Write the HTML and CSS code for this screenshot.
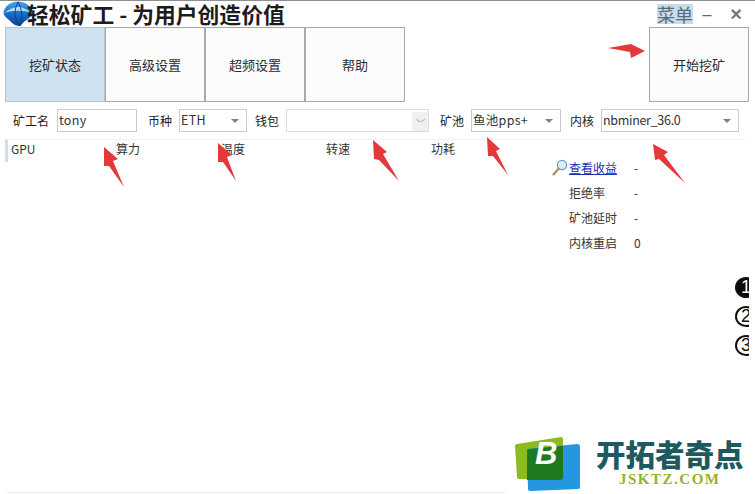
FILE: index.html
```html
<!DOCTYPE html>
<html lang="zh">
<head>
<meta charset="utf-8">
<title>轻松矿工</title>
<link rel="stylesheet" href="styles.css">
</head>
<body>
<div class="app">
  <header class="titlebar">
    <svg class="globe" width="30" height="26" viewBox="0 0 30 26">
      <defs>
        <linearGradient id="gl" x1="0" y1="0" x2="0" y2="1">
          <stop offset="0" stop-color="#4aa3e6"/>
          <stop offset="0.45" stop-color="#1b74cc"/>
          <stop offset="1" stop-color="#0c3f92"/>
        </linearGradient>
      </defs>
      <path d="M15 .5 C23 .5 29 6 29.5 12 C29 15 25 18 22 20 L17 25 C12 25 9 22 6 19 C3 17 .5 14 .5 12 C1 6 7 .5 15 .5Z" fill="url(#gl)"/>
      <path d="M1 12 C8 9 22 9 29 12 C22 7 18 6 15 6 C11 6 6 8 1 12Z" fill="#b5dcf7"/>
      <path d="M15 1 C11 8 11 17 16 25 M15 1 C19 8 20 16 17 25" fill="none" stroke="#0b3f8e" stroke-width="1"/>
    </svg>
    <h1 class="app-title">轻松矿工 - 为用户创造价值</h1>
    <div class="window-actions">
      <span class="menu-label">菜单</span>
      <span class="win-btn">–</span>
      <span class="win-btn close">×</span>
    </div>
  </header>

  <nav class="toolbar">
    <div class="tabs">
      <button class="tab active">挖矿状态</button>
      <button class="tab">高级设置</button>
      <button class="tab">超频设置</button>
      <button class="tab">帮助</button>
    </div>
    <button class="tab start">开始挖矿</button>
  </nav>

  <section class="form-row">
    <label class="lbl lbl-miner">矿工名</label>
    <div class="field f-miner">tony</div>
    <label class="lbl lbl-coin">币种</label>
    <div class="field f-coin">ETH<i class="caret"></i></div>
    <label class="lbl lbl-wallet">钱包</label>
    <div class="field f-wallet">
      <span class="chev">
        <svg width="11" height="6" viewBox="0 0 11 6"><path d="M1 1 Q5.5 6 10 1" fill="none" stroke="#c4c4c4" stroke-width="1.2"/></svg>
      </span>
    </div>
    <label class="lbl lbl-pool">矿池</label>
    <div class="field f-pool">鱼池pps+<i class="caret"></i></div>
    <label class="lbl lbl-core">内核</label>
    <div class="field f-core">nbminer_36.0<i class="caret"></i></div>
  </section>

  <div class="table-head">
    <span class="col">GPU</span>
    <span class="col">算力</span>
    <span class="col">温度</span>
    <span class="col">转速</span>
    <span class="col">功耗</span>
  </div>

  <aside class="stats">
    <div class="stat">
      <svg class="lens" width="16" height="17" viewBox="0 0 16 17">
        <circle cx="10" cy="6" r="4.6" fill="#dcedf8" stroke="#6f9cc0" stroke-width="1.3"/>
        <path d="M6.6 9.6 L1.5 15.5" stroke="#b08a52" stroke-width="2.2" stroke-linecap="round"/>
      </svg>
      <a class="stat-name link" href="#">查看收益</a><span class="stat-val">-</span>
    </div>
    <div class="stat"><span class="stat-name">拒绝率</span><span class="stat-val">-</span></div>
    <div class="stat"><span class="stat-name">矿池延时</span><span class="stat-val">-</span></div>
    <div class="stat"><span class="stat-name">内核重启</span><span class="stat-val">0</span></div>
  </aside>

  <div class="pager">
    <span class="dot on">1</span>
    <span class="dot">2</span>
    <span class="dot">3</span>
  </div>
</div>

<svg class="arrows" width="755" height="494" viewBox="0 0 755 494">
  <g fill="#e5383b">
    <polygon points="104,147 118,159 113,161 124,187 109,166 104,166"/>
    <polygon points="218,143 232,155 227,157 236,181 223,162 218,162"/>
    <polygon points="373,140 387,152 383,154 399,181 379,160 374,159"/>
    <polygon points="487,137 500,149 496,151 508,175 493,156 488,156"/>
    <polygon points="653,144 668,152 664,155 685,183 659,159 655,160"/>
    <polygon points="608,48 631,44 645,51 631,58 630,52"/>
  </g>
</svg>

<div class="watermark">
  <svg class="mark" width="77" height="56" viewBox="0 0 77 56">
    <path d="M2 10 Q2 8 4 8 L48 1 Q50 1 50 3 L50 44 L6 43 Q4 43 4 41Z" fill="#8dbb1d"/>
    <path d="M14 13 L64 8 Q67 8 67 11 L67 51 Q67 53 65 53 L17 55 Q15 55 15 53Z" fill="#2497e0"/>
    <path d="M14 15 Q14 13 16 13 L50 10 L50 41 Q50 44 47 44 L14 44Z" fill="#1f7a1f"/>
    <text class="mark-b" x="22" y="28">B</text>
  </svg>
  <div class="brand">
    <div class="brand-name">开拓者奇点</div>
    <div class="brand-url">JSKTZ.COM</div>
  </div>
</div>
<div class="bottom-line"></div>
</body>
</html>
```
FILE: styles.css
```css
* { box-sizing: border-box; }
html, body { margin: 0; padding: 0; }
body {
  width: 755px;
  height: 494px;
  overflow: hidden;
  position: relative;
  background: #fff;
  color: #222;
  font-family: "Noto Sans CJK SC", "Liberation Sans", sans-serif;
  font-size: 12px;
}
.app {
  border-top: 1px solid #8f8f8f;
  display: flex;
  flex-direction: column;
  height: 494px;
}
.titlebar {
  height: 26px;
  display: flex;
  align-items: center;
  flex: none;
}
.globe { margin: 0 -8px 0 3px; flex: none; }
.app-title {
  margin: 0 0 0 2px;
  position: relative;
  font-size: 21.8px;
  line-height: 26px;
  font-weight: 700;
  font-family: "Noto Sans CJK SC", sans-serif;
  color: #1c1c1c;
  white-space: nowrap;
}
.window-actions {
  margin-left: auto;
  margin-right: 12px;
  display: flex;
  align-items: center;
  font-size: 18px;
  color: #5b6a75;
}
.menu-label {
  background: #c9dcea;
  width: 36px;
  line-height: 20px;
  height: 20px;
  white-space: nowrap;
  font-weight: 400;
}
.win-btn {
  width: 14px;
  margin-left: 7px;
  text-align: center;
  color: #666;
  font-size: 16px;
  line-height: 19px;
  font-family: "Liberation Sans", sans-serif;
}
.win-btn.close { margin-left: 15px; font-size: 20px; font-weight: 700; color: #777; }
.toolbar {
  flex: none;
  height: 75px;
  display: flex;
  justify-content: space-between;
  padding: 0 6px 0 5px;
}
.tabs { display: flex; }
.tab {
  width: 100px;
  height: 75px;
  padding: 0;
  background: #fcfcfc;
  border: 1px solid #a9a9a9;
  font: inherit;
  font-size: 13px;
  color: #2a2a2a;
}
.tab.active { background: #cfe2f2; border-color: #b4c4d2; }
.form-row {
  flex: none;
  height: 22px;
  margin-top: 7px;
  display: flex;
  align-items: center;
}
.lbl { font-size: 12px; white-space: nowrap; }
.lbl-miner { margin-left: 13px; width: 44px; }
.lbl-coin { margin-left: 11px; width: 31px; }
.lbl-wallet { margin-left: 8px; width: 31px; }
.lbl-pool { margin-left: 11px; width: 31px; }
.lbl-core { margin-left: 9px; width: 31px; }
.field {
  height: 23px;
  border: 1px solid #c6ced4;
  background: #fff;
  font-size: 12.5px;
  line-height: 20px;
  padding-left: 1px;
  letter-spacing: 0.3px;
  position: relative;
  white-space: nowrap;
  color: #333;
}
.f-miner { width: 80px; }
.f-coin { width: 68px; }
.f-wallet { width: 143px; border-color: #d9dde0; }
.f-pool { width: 90px; }
.f-core { width: 138px; letter-spacing: -0.3px; }
.caret {
  position: absolute;
  right: 7px;
  top: 9px;
  border-left: 4px solid transparent;
  border-right: 4px solid transparent;
  border-top: 4px solid #808080;
}
.chev {
  position: absolute;
  right: 0;
  top: 2px;
  width: 16px;
  height: 19px;
  background: #f0f0f0;
  display: flex;
  align-items: center;
  justify-content: center;
}
.table-head {
  flex: none;
  margin: 8px 0 0 5px;
  width: 740px;
  height: 23px;
  border-top: 1px solid #f2f2f2;
  border-left: 3px solid #d3deea;
  padding: 0 0 5px 3px;
  display: grid;
  grid-template-columns: repeat(5, 105px);
  align-items: center;
  font-size: 12px;
  color: #333;
}
.stats {
  flex: none;
  align-self: flex-end;
  width: 186px;
  margin-top: -7px;
  font-size: 12px;
}
.stat {
  height: 25px;
  display: flex;
  align-items: center;
  position: relative;
}
.stat-name { width: 65px; color: #333; }
.stat-val { color: #333; }
.link { color: #1a2fb0; text-decoration: underline; }
.lens { position: absolute; left: -17px; top: 4px; }
.pager {
  flex: none;
  align-self: flex-end;
  width: 14px;
  margin: 22px 6px 0 0;
  display: flex;
  flex-direction: column;
  gap: 8px;
  overflow: hidden;
}
.dot {
  width: 22px;
  height: 21px;
  flex: none;
  border: 2px solid #111;
  border-radius: 50%;
  font-family: "Liberation Sans", sans-serif;
  font-size: 18px;
  line-height: 17px;
  text-align: center;
  color: #111;
  background: #fff;
}
.dot.on { background: #0a0a0a; color: #fff; }
.arrows { position: absolute; left: 0; top: 0; pointer-events: none; }
.watermark {
  position: absolute;
  left: 513px;
  top: 436px;
  display: flex;
  align-items: flex-start;
}
.mark-b {
  font-family: "Liberation Sans", sans-serif;
  font-weight: 700;
  font-style: italic;
  font-size: 31px;
  fill: #fff;
}
.brand { margin-left: 6px; }
.brand-name {
  font-family: "Noto Sans CJK SC", sans-serif;
  font-weight: 900;
  font-size: 29.5px;
  line-height: 34px;
  height: 36px;
  color: #1d5a60;
  white-space: nowrap;
}
.brand-url {
  font-family: "Liberation Serif", serif;
  font-weight: 700;
  font-size: 15px;
  line-height: 14px;
  letter-spacing: 1.5px;
  color: #93b32a;
  text-align: center;
}
.bottom-line {
  position: absolute;
  left: 7px;
  bottom: 1px;
  width: 498px;
  height: 1px;
  background: #e8e8e8;
}
```
